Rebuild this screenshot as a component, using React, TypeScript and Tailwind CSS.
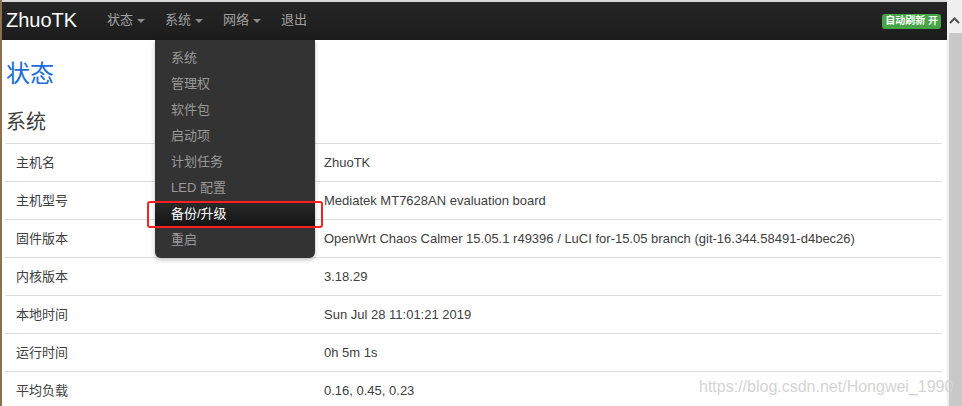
import React from "react";

const rows: [string, string][] = [
  ["主机名", "ZhuoTK"],
  ["主机型号", "Mediatek MT7628AN evaluation board"],
  ["固件版本", "OpenWrt Chaos Calmer 15.05.1 r49396 / LuCI for-15.05 branch (git-16.344.58491-d4bec26)"],
  ["内核版本", "3.18.29"],
  ["本地时间", "Sun Jul 28 11:01:21 2019"],
  ["运行时间", "0h 5m 1s"],
  ["平均负载", "0.16, 0.45, 0.23"],
];

const menu = ["系统", "管理权", "软件包", "启动项", "计划任务", "LED 配置", "备份/升级", "重启"];

function Caret() {
  return <span className="ml-[4px] inline-block w-0 h-0 border-l-[4px] border-r-[4px] border-t-[4px] border-l-transparent border-r-transparent border-t-[#8a8a8a] mt-[2px]" />;
}

export default function App() {
  return (
    <div className="relative w-[962px] h-[406px] overflow-hidden bg-white flex font-['Liberation_Sans','Noto_Sans_CJK_SC',sans-serif]">
      <div className="w-[2px] shrink-0 bg-[#8c7050]" />
      <div className="flex-1 flex flex-col min-w-0">
        <div className="h-[2px] shrink-0 bg-[#d9d9d9]" />
        <nav className="h-[38px] shrink-0 bg-gradient-to-b from-[#262626] to-[#1c1c1c] flex items-center pb-[3px]">
          <div className="w-[95px] pl-[4px] text-[20px] leading-[24px] text-white">ZhuoTK</div>
          <div className="flex items-center text-[13px] text-[#a0a0a0]">
            <div className="px-[10px] flex items-center">状态<Caret /></div>
            <div className="px-[10px] flex items-center">系统<Caret /></div>
            <div className="px-[10px] flex items-center">网络<Caret /></div>
            <div className="px-[10px] flex items-center">退出</div>
          </div>
          <div className="ml-auto mr-[6px] mt-[3px] bg-[#46a546] rounded-[3px] px-[3px] h-[15px] flex items-center text-[10px] font-bold text-white leading-none">
            自动刷新 开
          </div>
        </nav>
        <main className="shrink-0 pl-[3px] pr-[5px]">
          <h1 className="mt-[18px] pl-[1px] text-[24px] leading-[32px] text-[#1a6ed8]">状态</h1>
          <h2 className="mt-[18px] pl-[1px] text-[20px] leading-[28px] text-[#404040]">系统</h2>
          <div className="mt-[7px] text-[13px] text-[#404040]">
            {rows.map(([k, v]) => (
              <div key={k} className="h-[38px] border-t border-[#dddddd] flex items-center">
                <div className="w-[309px] pl-[11px]">{k}</div>
                <div className="pl-[10px] whitespace-nowrap">{v}</div>
              </div>
            ))}
          </div>
        </main>
      </div>
      <div className="w-[15px] shrink-0 bg-[#f0f0f0] flex flex-col">
        <div className="h-[33px] shrink-0 flex items-start justify-center pt-[17px]">
          <svg width="11" height="7" viewBox="0 0 11 7">
            <path d="M1 6 L5.5 1.5 L10 6" fill="none" stroke="#505050" strokeWidth="2" />
          </svg>
        </div>
        <div className="flex-1 ml-[2px] bg-[#c8c8c8]" />
      </div>

      <div className="absolute left-[155px] top-[40px] w-[160px] bg-[#333333] rounded-b-[6px] shadow-[0_2px_4px_rgba(0,0,0,0.25)] py-[5px] text-[13px]">
        {menu.map((m) => (
          <div
            key={m}
            className={
              m === "备份/升级"
                ? "h-[26px] pl-[16px] flex items-center text-white bg-gradient-to-b from-[#2b2b2b] to-[#141414]"
                : "h-[26px] pl-[16px] flex items-center text-[#999999]"
            }
          >
            {m}
          </div>
        ))}
      </div>

      <div className="absolute left-[147px] top-[201px] w-[176px] h-[27px] border-2 border-[#ff1f1f] rounded-[3px]" />

      <div className="absolute left-[699px] top-[377px] text-[16px] leading-[20px] text-[#d4d4d4] whitespace-nowrap">
        https://blog.csdn.net/Hongwei_1990
      </div>
    </div>
  );
}
